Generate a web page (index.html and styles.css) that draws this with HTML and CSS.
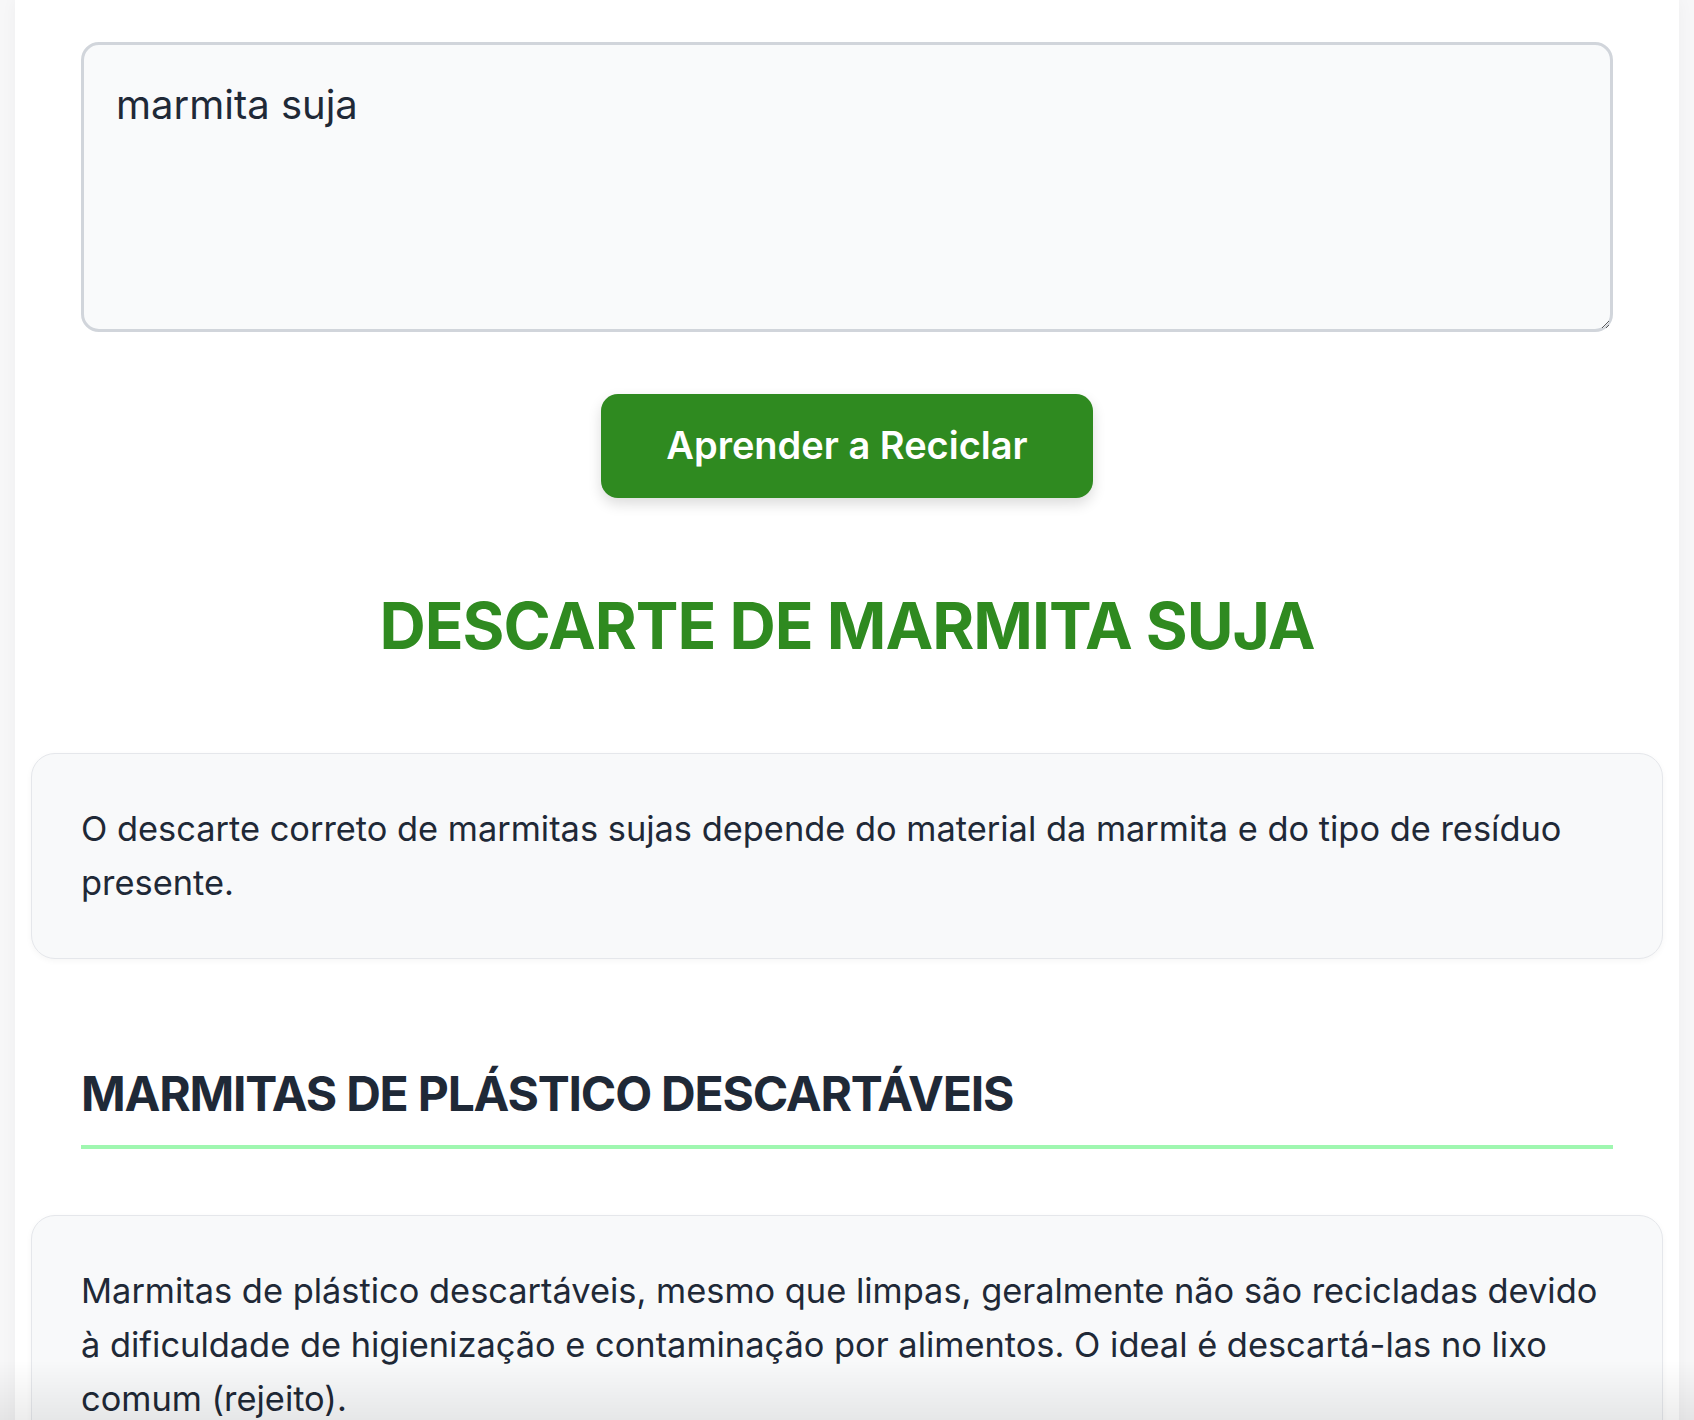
FILE: index.html
```html
<!DOCTYPE html>
<html lang="pt-BR">
<head>
<meta charset="utf-8">
<title>Aprender a Reciclar</title>
<link rel="stylesheet" href="styles.css">
</head>
<body>
<main class="page">
  <section class="form">
    <textarea class="query">marmita suja</textarea>
    <div class="actions">
      <button class="btn" type="button">Aprender a Reciclar</button>
    </div>
  </section>

  <h1 class="title">DESCARTE DE MARMITA SUJA</h1>

  <div class="card">
    <p>O descarte correto de marmitas sujas depende do material da marmita e do tipo de resíduo presente.</p>
  </div>

  <h2 class="section-title">MARMITAS DE PLÁSTICO DESCARTÁVEIS</h2>

  <div class="card">
    <p>Marmitas de plástico descartáveis, mesmo que limpas, geralmente não são recicladas devido à dificuldade de higienização e contaminação por alimentos. O ideal é descartá-las no lixo comum (rejeito).</p>
  </div>
</main>
<div class="fade"></div>
</body>
</html>
```

FILE: styles.css
```css
* { box-sizing: border-box; }

html, body {
  margin: 0;
  padding: 0;
}

body {
  background: #f7f7f8;
  font-family: "Inter", "Open Sans", "Liberation Sans", sans-serif;
  color: #1f2937;
}

.page {
  width: 1664px;
  margin: 0 auto;
  min-height: 100vh;
  background: #ffffff;
  padding: 42px 16px 80px;
  box-shadow: 0 0 16px rgba(0, 0, 0, 0.04);
}

.form {
  padding: 0 50px;
}

.query {
  display: block;
  width: 100%;
  height: 290px;
  border: 3px solid #d1d5db;
  border-radius: 18px;
  background: #f9fafb;
  padding: 32px;
  font-family: inherit;
  font-size: 40px;
  line-height: 1.4;
  color: #1f2937;
  outline: none;
}

.actions {
  display: flex;
  justify-content: center;
  margin-top: 62px;
}

.btn {
  background: #2f8a20;
  color: #ffffff;
  border: none;
  border-radius: 17px;
  font-family: inherit;
  font-weight: 600;
  font-size: 38px;
  line-height: 1.2;
  padding: 29px 65px;
  box-shadow: 0 6px 14px rgba(0, 0, 0, 0.14);
  cursor: pointer;
}

.title {
  text-align: center;
  color: #2f8a20;
  font-weight: 700;
  font-size: 64px;
  letter-spacing: -1px;
  line-height: 1.2;
  margin: 90px 0 89px;
}

.card {
  background: #f8f9fa;
  border: 1px solid #e5e7eb;
  border-radius: 24px;
  padding: 48px 60px 48px 49px;
  box-shadow: 0 2px 6px rgba(0, 0, 0, 0.04);
}

.card p {
  margin: 0;
  font-size: 34.4px;
  line-height: 54px;
  color: #1f2937;
}

.section-title {
  margin: 106px 50px 66px;
  font-weight: 700;
  font-size: 48px;
  letter-spacing: -1.2px;
  line-height: 1.2;
  color: #1f2937;
  padding-bottom: 22px;
  border-bottom: 4px solid #9ff7b0;
}

.fade {
  position: fixed;
  left: 0;
  right: 0;
  bottom: 0;
  height: 60px;
  background: linear-gradient(to bottom, rgba(0, 0, 0, 0), rgba(0, 0, 0, 0.07));
  pointer-events: none;
}
```
